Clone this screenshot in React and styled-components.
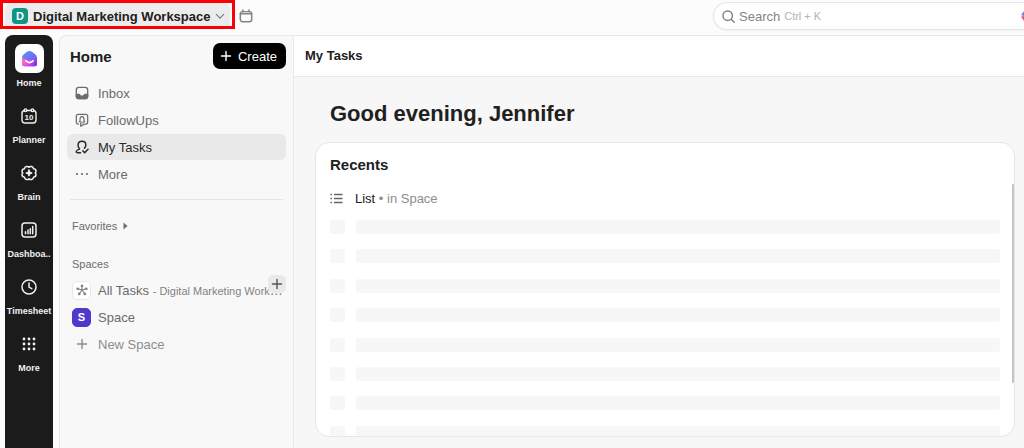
import React, { useState } from 'react';
import styled, { createGlobalStyle, css } from 'styled-components';

const LogoIcon = () => (
  <svg width='17' height='17' viewBox='0 0 17 17'>
    <defs>
      <linearGradient id='roof' x1='0.2' y1='0' x2='0.9' y2='1'>
        <stop offset='0' stopColor='#4a9cf8' />
        <stop offset='0.5' stopColor='#6f6cf6' />
        <stop offset='1' stopColor='#8a3cf5' />
      </linearGradient>
      <linearGradient id='base' x1='0' y1='0.3' x2='1' y2='0.6'>
        <stop offset='0' stopColor='#ff6fc4' />
        <stop offset='0.5' stopColor='#e04be0' />
        <stop offset='1' stopColor='#7b33ee' />
      </linearGradient>
    </defs>
    <path
      d='M1 8c0-1.6.7-2.900 1.900-3.800l2.700-2.300c1.700-1.200 4.100-1.200 5.800 0l2.700 2.300C15.300 5.100 16 6.400 16 8v6a2.300 2.300 0 0 1-2.300 2.300H3.300A2.300 2.300 0 0 1 1 14z'
      fill='url(#roof)'
    />
    <path
      d='M1 7.600c2.200.4 3.600 2.400 7.500 2.400s5.300-1 7.500-2v6a2.300 2.300 0 0 1-2.300 2.300H3.300A2.300 2.300 0 0 1 1 14z'
      fill='url(#base)'
    />
    <path
      d='M4.800 10.800c1.900 2.400 5.500 2.400 7.400 0'
      fill='none'
      stroke='#fff'
      strokeWidth='1.6'
      strokeLinecap='round'
    />
  </svg>
);

const Line = ({ size = 16, width = 1.5, children }) => (
  <svg
    width={size}
    height={size}
    viewBox='0 0 16 16'
    fill='none'
    stroke='currentColor'
    strokeWidth={width}
    strokeLinecap='round'
    strokeLinejoin='round'
    aria-hidden='true'
  >
    {children}
  </svg>
);

const PlannerIcon = () => (
  <svg width='16' height='16' viewBox='0 0 16 16' aria-hidden='true'>
    <g fill='none' stroke='currentColor' strokeWidth='1.4'>
      <rect x='1' y='2.5' width='14' height='12.5' rx='3' />
      <circle cx='4.5' cy='2.2' r='1.3' fill='#1b1b1b' />
      <circle cx='11.5' cy='2.2' r='1.3' fill='#1b1b1b' />
    </g>
    <text
      x='8'
      y='12'
      fontSize='8'
      fontWeight='700'
      textAnchor='middle'
      fill='currentColor'
    >
      10
    </text>
  </svg>
);

const BrainIcon = () => (
  <Line>
    <path d='M5.400 1.500c1.100-.3 2 .1 2.600.8.600-.7 1.500-1.100 2.600-.8 1.200.3 1.800 1.200 1.900 2.300 1.500.2 2.600 1 2.500 2.400 0 .7-.3 1.300-.8 1.800.5.5.8 1.100.8 1.800 0 1.400-1 2.200-2.500 2.400-.1 1.100-.7 2-1.900 2.300-1.100.3-2-.1-2.600-.8-.6.7-1.500 1.100-2.600.8-1.200-.3-1.800-1.200-1.900-2.300C2 12 1 11.200 1 9.800 1 9.100 1.300 8.500 1.800 8 1.300 7.500 1 6.900 1 6.200 1 4.800 2 4 3.500 3.800c.1-1.100.7-2 1.900-2.300z' />
    <path
      d='M8 4.800 8.900 7.100 11.200 8 8.900 8.900 8 11.200 7.100 8.900 4.800 8 7.100 7.100z'
      fill='currentColor'
      strokeWidth='1'
    />
  </Line>
);

const DashboardIcon = () => (
  <Line>
    <rect x='1' y='1' width='14' height='14' rx='3' />
    <path d='M4.500 11.800V9.800M7 11.800V8M9.300 11.800V6.800M11.700 11.800V4.600' />
  </Line>
);

const ClockIcon = () => (
  <Line>
    <circle cx='8' cy='8' r='7' />
    <path d='M8 4v4.200l2.800 1.500' />
  </Line>
);

const GridIcon = () => (
  <svg width='14' height='14' viewBox='0 0 14 14' fill='currentColor' aria-hidden='true'>
    {[2, 7, 12].map((y) =>
      [2, 7, 12].map((x) => <circle key={`${x}-${y}`} cx={x} cy={y} r='1.4' />)
    )}
  </svg>
);

const CalendarIcon = () => (
  <Line size={14} width={1.7}>
    <rect x='1.5' y='3' width='13' height='11.5' rx='2.5' />
    <path d='M1.500 5.500h13M4.500 1v2M11.500 1v2' />
  </Line>
);

const ChevronIcon = () => (
  <Line size={10} width={1.7}>
    <path d='M2 5.500l6 6 6-6' />
  </Line>
);

const SearchIcon = () => (
  <Line size={13} width={1.8}>
    <circle cx='7' cy='7' r='5.8' />
    <path d='M11.300 11.300L15 15' />
  </Line>
);

const SparkIcon = () => (
  <svg width='12' height='12' viewBox='0 0 12 12' aria-hidden='true'>
    <path d='M6 0l1.500 4.500L12 6l-4.500 1.500L6 12 4.500 7.500 0 6l4.500-1.500z' fill='#e0489a' />
    <path d='M0 5l3-4v4z' fill='#8b7bf0' />
    <path d='M0 7l3 4V6z' fill='#e8607a' />
  </svg>
);

const InboxIcon = () => (
  <Line size={14}>
    <rect x='1.5' y='1.5' width='13' height='13' rx='3' />
    <path
      d='M1.500 9.500h3c.6 0 .8.4 1 .8.400.9 1.200 1.400 2.500 1.400s2.100-.5 2.500-1.400c.2-.4.4-.8 1-.8h3v2.200c0 1.700-1.100 2.800-2.800 2.800H4.300c-1.700 0-2.800-1.100-2.800-2.800z'
      fill='currentColor'
    />
  </Line>
);

const FollowIcon = () => (
  <Line size={14} width={1.4}>
    <path d='M4 12.600H3.700c-1.300 0-2.200-.9-2.200-2.200V3.700c0-1.300.9-2.200 2.200-2.200h8.600c1.300 0 2.200.9 2.200 2.200v6.700c0 1.300-.9 2.200-2.200 2.200h-1L6.500 15v-2.400' />
    <path d='M4.800 10c1-.5 1.200-1.300 1-2.400C5.500 5.400 6.500 4.200 8 4.200s2.500 1.200 2.200 3.400c-.2 1.100 0 1.900 1 2.400M6.800 10v2M9.200 10v1.500' />
  </Line>
);

const TasksIcon = () => (
  <Line size={14} width={1.7}>
    <path d='M6.300 14.500H2.600c-1 0-1.400-.8-1-1.600.5-1 1.600-1.800 3-2.200.6-.2.600-.8.200-1.300C3.700 8.300 3.300 7 3.500 5.200 3.700 3 5.500 1.300 8 1.300s4.300 1.700 4.400 3.900c.1 1.700-.4 3-1.600 4.200' />
    <path d='M9 12.400l2.100 2.100 3.800-3.900' />
  </Line>
);

const DotsIcon = () => (
  <svg width='14' height='14' viewBox='0 0 14 14' fill='currentColor' aria-hidden='true'>
    <circle cx='2' cy='7' r='1.1' />
    <circle cx='7' cy='7' r='1.1' />
    <circle cx='12' cy='7' r='1.1' />
  </svg>
);

const PlusIcon = () => (
  <Line size={12} width={1.9}>
    <path d='M8 2v12M2 8h12' />
  </Line>
);

const HubIcon = () => (
  <Line size={12} width={1.5}>
    <path d='M8 8V3M8 8L2.500 6.500M8 8l5.500-1.500M8 8l-3.500 5M8 8l3.500 5' />
    <g fill='currentColor' stroke='none'>
      <circle cx='8' cy='2.5' r='1.8' />
      <circle cx='2.2' cy='6.3' r='1.8' />
      <circle cx='13.8' cy='6.3' r='1.8' />
      <circle cx='4.3' cy='13.2' r='1.8' />
      <circle cx='11.7' cy='13.2' r='1.8' />
    </g>
  </Line>
);

const ListIcon = () => (
  <svg width='13' height='11' viewBox='0 0 13 11' stroke='currentColor' aria-hidden='true'>
    <path d='M4 1.500h8.500M4 5.500h8.500M4 9.500h8.500' strokeWidth='1.4' />
    <path d='M0.500 1.500h1.500M0.500 5.500h1.500M0.500 9.500h1.500' strokeWidth='1.6' />
  </svg>
);

const railItems = [
  { name: 'Home', icon: <LogoIcon /> },
  { name: 'Planner', icon: <PlannerIcon /> },
  { name: 'Brain', icon: <BrainIcon /> },
  { name: 'Dashboa..', icon: <DashboardIcon /> },
  { name: 'Timesheet', icon: <ClockIcon /> },
  { name: 'More', icon: <GridIcon /> },
];

const menuItems = [
  { name: 'Inbox', icon: <InboxIcon /> },
  { name: 'FollowUps', icon: <FollowIcon /> },
  { name: 'My Tasks', icon: <TasksIcon /> },
  { name: 'More', icon: <DotsIcon /> },
];

const skeletonRows = [1, 2, 3, 4, 5, 6, 7, 8];

const App = () => {
  const [page, setPage] = useState('My Tasks');
  return (
    <Page>
      <GlobalStyle />
      <TopBar>
        <Highlight>
          <WorkspaceButton type='button'>
            <Avatar>D</Avatar>
            Digital Marketing Workspace
            <ChevronIcon />
          </WorkspaceButton>
        </Highlight>
        <IconButton type='button' aria-label='Calendar'>
          <CalendarIcon />
        </IconButton>
        <Search>
          <SearchIcon />
          <label htmlFor='search'>Search</label>
          <input id='search' type='text' placeholder='Ctrl + K' />
          <span className='spark'>
            <SparkIcon />
          </span>
        </Search>
      </TopBar>
      <Body>
        <Rail>
          {railItems.map((item, i) => (
            <RailLink href='#' key={item.name}>
              <RailIcon $filled={i === 0}>{item.icon}</RailIcon>
              <span>{item.name}</span>
            </RailLink>
          ))}
        </Rail>
        <Sidebar>
          <SidebarHead>
            <h2>Home</h2>
            <CreateButton type='button'>
              <PlusIcon />
              Create
            </CreateButton>
          </SidebarHead>
          <Menu>
            {menuItems.map((item) => (
              <MenuButton
                type='button'
                key={item.name}
                $active={page === item.name}
                onClick={() => setPage(item.name)}
              >
                <Slot>{item.icon}</Slot>
                {item.name}
              </MenuButton>
            ))}
          </Menu>
          <Divider />
          <SectionTitle>
            Favorites
            <svg width='5' height='8' viewBox='0 0 5 8' fill='currentColor'>
              <path d='M0.500 0.500L4.500 4 0.500 7.500z' />
            </svg>
          </SectionTitle>
          <Spaces>
            <SectionTitle>Spaces</SectionTitle>
            <Menu>
              <MenuButton type='button'>
                <Tile>
                  <HubIcon />
                </Tile>
                <p>
                  All Tasks <small>- Digital Marketing Workspace</small>
                </p>
              </MenuButton>
              <MenuButton type='button'>
                <Tile $purple>S</Tile>
                Space
              </MenuButton>
              <MenuButton type='button' $muted>
                <Slot>
                  <PlusIcon />
                </Slot>
                New Space
              </MenuButton>
            </Menu>
            <AddButton type='button' aria-label='Add space'>
              <PlusIcon />
            </AddButton>
          </Spaces>
        </Sidebar>
        <Main>
          <MainHead>My Tasks</MainHead>
          <Content>
            <h1>Good evening, Jennifer</h1>
            <Card>
              <h3>Recents</h3>
              <Recent href='#'>
                <ListIcon />
                <p>
                  List <span>• in Space</span>
                </p>
              </Recent>
              <Skeleton>
                {skeletonRows.map((row) => (
                  <li key={row}>
                    <i />
                    <b />
                  </li>
                ))}
              </Skeleton>
              <ScrollThumb />
            </Card>
          </Content>
        </Main>
      </Body>
    </Page>
  );
};

export default App;

const GlobalStyle = createGlobalStyle`
  * {
    margin: 0;
    padding: 0;
    box-sizing: border-box;
  }
  body {
    font-family: 'Liberation Sans', Arial, sans-serif;
    font-size: 13px;
    color: #202020;
  }
  button,
  input {
    font: inherit;
    color: inherit;
    border: none;
    background: none;
    outline: none;
  }
  a {
    color: inherit;
    text-decoration: none;
  }
  svg {
    display: block;
    flex-shrink: 0;
  }
`;

const Page = styled.div`
  display: flex;
  flex-direction: column;
  height: 100vh;
  overflow: hidden;
  background-color: #fcfcfc;
`;

const TopBar = styled.header`
  display: flex;
  align-items: flex-start;
  height: 35px;
  flex-shrink: 0;
`;

const Highlight = styled.div`
  border: 3px solid #fb0007;
  padding: 0 2px;
  height: 29px;
`;

const WorkspaceButton = styled.button`
  display: flex;
  align-items: center;
  gap: 5px;
  height: 23px;
  padding: 3px 5px 0 7px;
  border-radius: 6px 6px 0 0;
  background-color: #ececec;
  font-weight: 700;
  white-space: nowrap;
  svg {
    color: #777;
  }
`;

const Avatar = styled.span`
  width: 16px;
  height: 16px;
  border-radius: 4px;
  background-color: #0f9688;
  color: white;
  font-size: 11px;
  line-height: 16px;
  text-align: center;
`;

const IconButton = styled.button`
  display: flex;
  padding: 9px 4px;
  color: #838383;
`;

const Search = styled.div`
  display: flex;
  align-items: center;
  gap: 4px;
  width: 311px;
  height: 28px;
  margin: 2px 0 0 auto;
  padding-left: 8px;
  border: 1px solid #e6e6e6;
  border-right: none;
  border-radius: 14px 0 0 14px;
  background-color: white;
  box-shadow: 0 1px 2px rgba(0, 0, 0, 0.05);
  color: #838383;
  input {
    flex: 1;
    min-width: 0;
    font-size: 11px;
    &::placeholder {
      color: #b4b4b4;
    }
  }
  .spark {
    width: 3px;
    overflow: hidden;
  }
`;

const Body = styled.div`
  display: flex;
  flex: 1;
  min-height: 0;
`;

const Rail = styled.nav`
  display: flex;
  flex-direction: column;
  gap: 12px;
  width: 48px;
  flex-shrink: 0;
  margin: 0 6px 0 5px;
  padding-top: 9px;
  border-radius: 8px 8px 0 0;
  background-color: #1b1b1b;
  overflow: hidden;
`;

const RailLink = styled.a`
  display: flex;
  flex-direction: column;
  align-items: center;
  gap: 4px;
  color: #f0f0f0;
  span {
    font-size: 9px;
    font-weight: 700;
    line-height: 12px;
    white-space: nowrap;
  }
`;

const RailIcon = styled.div`
  display: grid;
  place-items: center;
  width: 29px;
  height: 29px;
  border-radius: 7px;
  background-color: ${({ $filled }) => ($filled ? 'white' : 'transparent')};
`;

const Sidebar = styled.aside`
  width: 235px;
  flex-shrink: 0;
  padding: 7px 7px 0;
  border: 1px solid #e9e9e9;
  border-bottom: none;
  border-radius: 8px 0 0 0;
  background-color: #f8f8f8;
`;

const SidebarHead = styled.div`
  display: flex;
  align-items: center;
  justify-content: space-between;
  padding-left: 3px;
  margin-bottom: 11px;
  h2 {
    font-size: 15px;
  }
`;

const CreateButton = styled.button`
  display: flex;
  align-items: center;
  gap: 6px;
  height: 26px;
  padding: 0 9px 0 7px;
  border-radius: 7px;
  background-color: black;
  color: white;
`;

const Menu = styled.div`
  display: flex;
  flex-direction: column;
  gap: 1px;
`;

const MenuButton = styled.button`
  display: flex;
  align-items: center;
  gap: 7px;
  width: 100%;
  height: 26px;
  padding: 0 2px 0 5px;
  border-radius: 6px;
  color: ${({ $muted }) => ($muted ? '#8d8d8d' : '#6b6b6b')};
  text-align: left;
  ${({ $active }) =>
    $active &&
    css`
      background-color: #e9e9e9;
      color: #2a2a2a;
    `}
  p {
    flex: 1;
    min-width: 0;
    overflow: hidden;
    text-overflow: ellipsis;
    white-space: nowrap;
  }
  small {
    font-size: 11px;
    color: #838383;
  }
`;

const Slot = styled.span`
  display: grid;
  place-items: center;
  width: 19px;
  height: 19px;
  flex-shrink: 0;
`;

const Tile = styled(Slot)`
  border: 1px solid ${({ $purple }) => ($purple ? '#5038cc' : '#e8e8e8')};
  border-radius: 5px;
  background-color: ${({ $purple }) => ($purple ? '#5038cc' : 'white')};
  color: ${({ $purple }) => ($purple ? 'white' : '#838383')};
  font-size: 11px;
  font-weight: 700;
`;

const Divider = styled.hr`
  margin: 12px 3px 18px;
  border: none;
  border-top: 1px solid #e4e4e4;
`;

const SectionTitle = styled.h4`
  display: flex;
  align-items: center;
  gap: 6px;
  height: 16px;
  padding-left: 5px;
  font-size: 11px;
  font-weight: 400;
  color: #6b6b6b;
`;

const Spaces = styled.section`
  position: relative;
  margin-top: 22px;
  ${SectionTitle} {
    margin-bottom: 5px;
  }
`;

const AddButton = styled.button`
  position: absolute;
  top: 19px;
  right: 0;
  display: grid;
  place-items: center;
  width: 18px;
  height: 18px;
  border-radius: 5px;
  background-color: #e9e9e9;
  color: #555;
`;

const Main = styled.main`
  display: flex;
  flex-direction: column;
  flex: 1;
  min-width: 0;
  border-top: 1px solid #e9e9e9;
  background-color: #f7f7f7;
`;

const MainHead = styled.div`
  height: 41px;
  padding-left: 11px;
  border-bottom: 1px solid #e9e9e9;
  background-color: white;
  font-weight: 700;
  line-height: 40px;
`;

const Content = styled.div`
  display: flex;
  flex-direction: column;
  flex: 1;
  min-height: 0;
  padding: 24px 9px 11px 21px;
  h1 {
    margin: 0 0 15px 15px;
    font-size: 22px;
    line-height: 26px;
  }
`;

const Card = styled.section`
  position: relative;
  flex: 1;
  min-height: 0;
  padding: 12px 14px 0;
  border: 1px solid #e6e6e6;
  border-radius: 14px;
  background-color: white;
  overflow: hidden;
  h3 {
    margin-bottom: 11px;
    font-size: 15px;
    line-height: 20px;
  }
`;

const Recent = styled.a`
  display: flex;
  align-items: center;
  gap: 12px;
  height: 24px;
  margin-bottom: 10px;
  svg {
    color: #646464;
  }
  span {
    color: #8d8d8d;
  }
`;

const Skeleton = styled.ul`
  display: flex;
  flex-direction: column;
  height: 235px;
  list-style: none;
  li {
    display: flex;
    flex: 1;
    gap: 11px;
  }
  i,
  b {
    width: 15px;
    height: 14px;
    border-radius: 2px;
    background-color: #f7f7f7;
  }
  b {
    flex: 1;
  }
`;

const ScrollThumb = styled.div`
  position: absolute;
  top: 41px;
  right: 0;
  width: 2px;
  height: 199px;
  border-radius: 1px;
  background-color: #c4c4c4;
`;
